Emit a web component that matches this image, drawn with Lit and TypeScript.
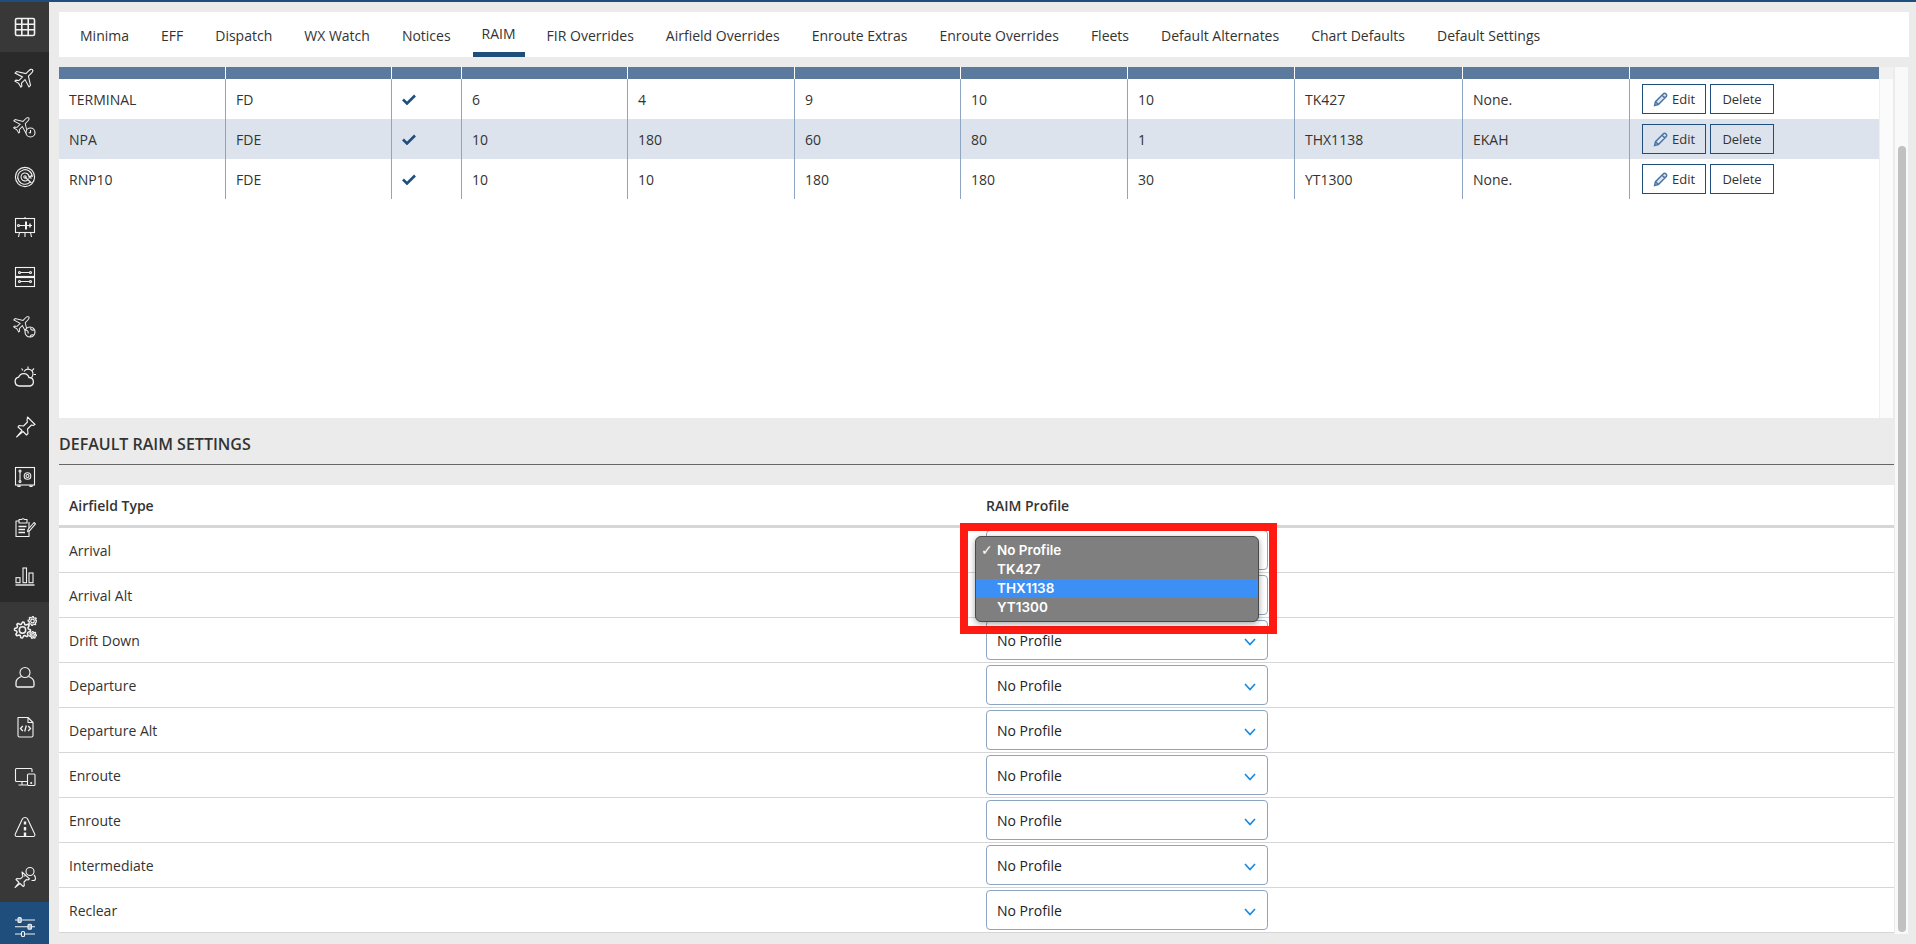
import { LitElement, css, html, svg } from 'lit'
import { customElement } from 'lit/decorators.js'

// plane pointing up, drawn around 12,12
const PLANE =
  'M12 1.5c1.1 0 1.8 1.6 1.8 3.2V9l8 5v2.2l-8-2.4v5l2.4 1.8V22L12 21l-4.2 1v-1.4l2.4-1.8v-5l-8 2.4V14l8-5V4.7c0-1.6.7-3.2 1.8-3.2z'

function gear(cx: number, cy: number, r: number, teeth: number) {
  const pts: string[] = []
  const step = (Math.PI * 2) / (teeth * 4)
  for (let i = 0; i < teeth * 4; i++) {
    const rad = i % 4 < 2 ? r : r * 0.74
    const a = i * step
    pts.push(`${(cx + Math.cos(a) * rad).toFixed(2)},${(cy + Math.sin(a) * rad).toFixed(2)}`)
  }
  return svg`<polygon points=${pts.join(' ')} stroke-linejoin="round"></polygon><circle cx=${cx} cy=${cy} r=${r * 0.4}></circle>`
}

const icons = [
  svg`<rect x="2.5" y="3.5" width="19" height="17" rx="1.5" stroke-width="1.6"></rect><path stroke-width="1.6" d="M2.5 9.2h19M2.5 14.8h19M8.8 3.5v17M15.2 3.5v17"></path>`,
  svg`<path transform="rotate(45 12 12)" d=${PLANE}></path>`,
  svg`<path transform="translate(-1 -1) scale(.86) rotate(45 12 12)" d=${PLANE}></path><circle class="solid-dark" cx="17.5" cy="17.5" r="4.5"></circle><path d="M17.5 15v2.7h-1.8"></path>`,
  svg`<circle cx="12" cy="12" r="9.6"></circle><path d="M19.3 12a7.3 7.3 0 1 0-2.2 5.2M16 12a4 4 0 1 0-1.2 2.8M12 12l6.5 6M15.5 10.5l3 3M18.5 10.5l-3 3"></path><circle cx="12" cy="12" r="1.2"></circle>`,
  svg`<rect x="2.5" y="3.500" width="19" height="14"></rect><path d="M12 2v1.500M6.500 17.500l-1 4.500M12 17.500V22M17.500 17.500l1 4.500M7 10.500h12"></path><circle cx="5.500" cy="10.500" r="1"></circle><path stroke-width="2" d="M13 6.500v8"></path><path stroke-width="1.500" d="M17 8.500v4"></path>`,
  svg`<rect x="2.5" y="2.5" width="19" height="19"></rect><path d="M2.5 12h19" stroke-width="2.2"></path><path d="M7 7.5h10M7 16.5h10"></path><circle cx="6.5" cy="7.5" r="1"></circle><circle cx="17.5" cy="7.5" r="1"></circle><circle cx="6.5" cy="16.5" r="1"></circle><circle cx="17.5" cy="16.5" r="1"></circle>`,
  svg`<path transform="translate(-1 -2) scale(.86) rotate(45 12 12)" d=${PLANE}></path><circle class="solid-dark" cx="17" cy="17" r="5"></circle><path d="M13 15c2 .5 2.5 2 2 3.500M18 12.500c-1 2 .5 3 3 2.500M17 22c.5-2 2-2.500 3.500-2"></path>`,
  svg`<path stroke-width="1.300" d="M6.500 21a4.500 4.500 0 0 1-.8-8.900A5.500 5.500 0 0 1 16 12.500a4.300 4.300 0 0 1 1 8.500z"></path><path d="M11 6.500a4.800 4.800 0 0 1 8.800 3.500 4.800 4.800 0 0 1-1.300 2.500M15 1.500v2.500M21 3.500l-1.700 1.800M23 9.500h-2.300M8.500 3.500l1.500 1.800"></path>`,
  svg`<path stroke-linejoin="round" d="M14.500 2l7.500 7.500-2 1-1.500-.5-4 4 .5 4.500-1.500 1.500-3.500-3.500-6.500 5.500 5.500-6.500-4-3.500L6 10.500l4.500.5 4-4-.5-1.500z"></path>`,
  svg`<rect x="2.500" y="2.500" width="19" height="17.500"></rect><path d="M5 20v1.500h2V20M17 20v1.500h2V20M7 6.500v9.500"></path><circle cx="7" cy="6" r="1"></circle><circle cx="7" cy="16.500" r="1"></circle><circle cx="14.500" cy="11" r="3.300"></circle><circle cx="14.500" cy="11" r="1.500"></circle>`,
  svg`<path stroke-linejoin="round" d="M16 7V21.500H3V6h3M6 6V4.500h2.500a2 2 0 0 1 3 0H14V8H6z"></path><path stroke-width="1.700" d="M5.500 11.500h8M5.500 14.500h6.500M5.500 17.500h6.500"></path><path stroke-linejoin="round" d="M15 14.500l6-7 1.500 1.300-6 7-2 .8z" class="solid-dark"></path>`,
  svg`<rect x="3" y="12.700" width="4" height="5"></rect><rect x="10" y="3" width="3.500" height="14.700"></rect><rect x="16" y="8" width="4" height="9.700"></rect><path d="M2.500 20h19" stroke-width="1.400"></path>`,
  svg`<g stroke-width="1.500">${gear(9.500, 15, 8, 8)}</g><g stroke-width="1.200">${gear(19.500, 6, 4.500, 8)}${gear(20, 20, 3.500, 7)}</g>`,
  svg`<circle cx="12" cy="7.500" r="5"></circle><path stroke-width="1.300" d="M8.500 11.500c-2.500 1-5.500 2.500-5.500 6v3a1.500 1.500 0 0 0 1.500 1.500h15a1.500 1.500 0 0 0 1.500-1.500v-3c0-3.500-3-5-5.500-6"></path>`,
  svg`<path stroke-linejoin="round" d="M5 2.500h10l5 5V20.500a1.500 1.500 0 0 1-1.500 1.500h-12A1.500 1.500 0 0 1 5 20.500zM15 2.500v5h5"></path><path stroke-width="1.300" d="M9.800 11l-2.300 2.500 2.300 2.500M15.200 11l2.300 2.500-2.300 2.500M13.300 10.500l-1.600 6"></path>`,
  svg`<path d="M14 16.500H3.500a1 1 0 0 1-1-1V4.500a1 1 0 0 1 1-1h14.500a1 1 0 0 1 1 1V7M9 16.500v3M5.500 20h8.500"></path><rect x="14.500" y="9" width="7.500" height="11.500" rx="1"></rect><circle cx="18.200" cy="18" r=".5"></circle>`,
  svg`<path stroke-linejoin="round" d="M9.500 3.800c1-1.800 4-1.800 5 0l7.200 15.200c.5 1.200-.2 2.500-1.500 2.500H3.800c-1.300 0-2-1.300-1.500-2.500z"></path><path stroke-width="2.400" d="M12 6.500v3M12 12v3.500M12 17.500v3.500"></path>`,
  svg`<path stroke-linejoin="round" d="M9 7l7.500 6.800-1.500 1.200-1.500-.5-2.500 2.500.3 3.500-1 1L7 18.500 2 22.500l4-5-3-3 1-1 3.500.3L10 11.300l-.5-1.500z"></path><circle cx="17" cy="6.500" r="4"></circle><path d="M13 10c-1 .5-1.500 1-1.500 1.500M21 10c1 1 1.500 2 1.500 3.500 0 1.500-1 2-2 2h-2"></path>`,
  svg`<path d="M2 5h3M8.500 5H22M2 11.700h13M18.500 11.700H22M2 19h6M12 19h10"></path><rect x="5" y="2.500" width="3.200" height="5" rx="1" class="solid-pale"></rect><rect x="15" y="9.200" width="3.500" height="5" rx="1" class="solid-pale"></rect><rect x="8.500" y="16.500" width="3" height="5" rx="1"></rect>`,
]

const tabs = [
  'Minima',
  'EFF',
  'Dispatch',
  'WX Watch',
  'Notices',
  'RAIM',
  'FIR Overrides',
  'Airfield Overrides',
  'Enroute Extras',
  'Enroute Overrides',
  'Fleets',
  'Default Alternates',
  'Chart Defaults',
  'Default Settings',
]

const profiles = [
  ['TERMINAL', 'FD', '6', '4', '9', '10', '10', 'TK427', 'None.'],
  ['NPA', 'FDE', '10', '180', '60', '80', '1', 'THX1138', 'EKAH'],
  ['RNP10', 'FDE', '10', '10', '180', '180', '30', 'YT1300', 'None.'],
]

const airfieldTypes = [
  'Arrival',
  'Arrival Alt',
  'Drift Down',
  'Departure',
  'Departure Alt',
  'Enroute',
  'Enroute',
  'Intermediate',
  'Reclear',
]

const menuItems = ['No Profile', 'TK427', 'THX1138', 'YT1300']

@customElement('app-root')
export class AppRoot extends LitElement {
  static styles = css`
    :host {
      display: block;
      height: 944px;
      overflow: hidden;
      border-top: 2px solid #1f4e7d;
      box-sizing: border-box;
      font-family: 'Open Sans', sans-serif;
      font-size: 14px;
      color: #333;
    }

    .shell {
      display: flex;
      height: 942px;
      background: #ebebeb;
    }

    .sidebar {
      width: 49px;
      flex: none;
      overflow: hidden;
      background: #2a2a2a;
    }

    .nav-item {
      height: 50px;
      display: flex;
      align-items: center;
      justify-content: center;
      --bg: #2a2a2a;
      background: var(--bg);
    }

    .nav-item.light {
      --bg: #383838;
    }

    .nav-item.active {
      --bg: #1f4e7d;
    }

    .nav-item svg {
      width: 24px;
      height: 24px;
      fill: none;
      stroke: #f2f2f2;
      stroke-width: 1.1;
    }

    .solid-dark {
      fill: var(--bg);
    }

    .solid-pale {
      fill: #a9bccf;
    }

    .main {
      flex: 1;
      min-width: 0;
      display: flex;
      flex-direction: column;
      padding: 10px 7px 10px 10px;
    }

    .tabs {
      height: 45px;
      flex: none;
      display: flex;
      padding-left: 5px;
      background: #fff;
    }

    .tab {
      margin: 0 7px;
      padding: 2px 9px 0;
      display: flex;
      align-items: center;
      white-space: nowrap;
    }

    .tab.active {
      margin: 0 6px;
      padding-top: 0;
      padding-bottom: 2px;
      box-shadow: inset 0 -5px 0 #1f4e7d;
    }

    .body {
      flex: 1;
      min-height: 0;
      margin-top: 10px;
      display: flex;
    }

    .content {
      width: 1835px;
      flex: none;
      display: flex;
      flex-direction: column;
    }

    .top-panel {
      height: 351px;
      flex: none;
      display: flex;
      margin-right: 1px;
    }

    .profiles {
      width: 1820px;
      flex: none;
      background: #fff;
    }

    .gutter {
      flex: 1;
      background: #fbfbfb;
      border-left: 1px solid #efefef;
    }

    .gutter-head {
      height: 12px;
      background: #f1f1f1;
    }

    .grid-row {
      display: grid;
      grid-template-columns: 167px 166px 70px 166px 167px 166px 167px 167px 168px 167px 249px;
    }

    .grid-row > div {
      box-sizing: border-box;
      border-right: 1px solid #8ea5c1;
      padding-left: 10px;
      display: flex;
      align-items: center;
    }

    .grid-row > div:last-child {
      border-right: none;
      padding-left: 12px;
      gap: 4px;
    }

    .grid-head {
      height: 12px;
      background: #5b7a9d;
    }

    .grid-head > div {
      border-right-color: #fff;
    }

    .grid-body {
      height: 40px;
    }

    .grid-body.alt {
      background: #dce3ec;
    }

    .check {
      width: 14px;
      height: 11px;
      fill: none;
      stroke: #1f4e7d;
      stroke-width: 2.6;
    }

    .btn {
      box-sizing: border-box;
      width: 64px;
      height: 30px;
      border: 1px solid #1f4e7d;
      display: flex;
      align-items: center;
      justify-content: center;
      gap: 4px;
      font-size: 13px;
    }

    .btn svg {
      width: 15px;
      height: 15px;
      fill: #dce6f1;
      stroke: #4a75a5;
      stroke-width: 1.4;
    }

    .settings {
      flex: 1;
      position: relative;
    }

    .settings h2 {
      margin: 0;
      height: 47px;
      box-sizing: border-box;
      padding-top: 12px;
      font-size: 16px;
      line-height: 28px;
      font-weight: 600;
      border-bottom: 1px solid #666;
    }

    .defaults {
      margin-top: 20px;
      background: #fff;
    }

    .defaults-row {
      display: grid;
      grid-template-columns: 927px 1fr;
      box-sizing: border-box;
      height: 45px;
      align-items: center;
      border-bottom: 1px solid #d6d6d6;
    }

    .defaults-row.head {
      height: 43px;
      border-bottom: 3px solid #d6d6d6;
      font-weight: 600;
    }

    .defaults-row > div:first-child {
      padding-left: 10px;
    }

    .select {
      box-sizing: border-box;
      width: 282px;
      height: 40px;
      border: 1px solid #8ea5c1;
      border-radius: 4px;
      padding: 0 11px 0 10px;
      display: flex;
      align-items: center;
      justify-content: space-between;
      color: #222;
    }

    .select svg {
      width: 12px;
      height: 8px;
      margin-top: 3px;
      fill: none;
      stroke: #1b8ae2;
      stroke-width: 1.7;
    }

    .callout {
      position: absolute;
      left: 901px;
      top: 105px;
      box-sizing: border-box;
      width: 317px;
      height: 111px;
      border: 8px solid #ff1a12;
    }

    .menu {
      box-sizing: border-box;
      margin: 5px 0 0 7px;
      width: 284px;
      height: 86px;
      padding: 4px 0;
      background: #7f7f7f;
      border: 1px solid #4a4a4a;
      border-radius: 6px;
      box-shadow: 0 2px 6px rgba(0, 0, 0, 0.35);
      font-family: Inter, sans-serif;
      font-size: 13.5px;
      font-weight: 600;
      color: #fff;
    }

    .menu-item {
      height: 19px;
      display: flex;
      align-items: center;
      line-height: 19px;
    }

    .menu-item.hover {
      background: #3b8ff5;
    }

    .tick {
      width: 21px;
      flex: none;
      box-sizing: border-box;
      padding-left: 5px;
      font-family: 'DejaVu Sans', sans-serif;
      font-size: 14px;
    }

    .scrollbar {
      width: 13px;
      margin-left: 1px;
      flex: none;
      display: flex;
      padding: 79px 2px 2px 3px;
      box-sizing: border-box;
      background: #f9f9f9;
    }

    .thumb {
      flex: 1;
      background: #c1c1c1;
      border-radius: 4px;
    }
  `

  render() {
    return html`
      <div class="shell">
        <nav class="sidebar">
          ${icons.map((icon, i) => {
            const tone = i === 18 ? 'active' : i === 0 || i >= 12 ? 'light' : ''
            return html`<div class="nav-item ${tone}"><svg viewBox="0 0 24 24">${icon}</svg></div>`
          })}
        </nav>
        <main class="main">
          <div class="tabs">
            ${tabs.map(t => html`<div class="tab ${t === 'RAIM' ? 'active' : ''}">${t}</div>`)}
          </div>
          <div class="body">
            <div class="content">
              <div class="top-panel">
                <div class="profiles">
                  <div class="grid-row grid-head">
                    ${Array.from({ length: 11 }, () => html`<div></div>`)}
                  </div>
                  ${profiles.map((p, i) => this.#profileRow(p, i))}
                </div>
                <div class="gutter"><div class="gutter-head"></div></div>
              </div>
              <section class="settings">
                <h2>DEFAULT RAIM SETTINGS</h2>
                <div class="defaults">
                  <div class="defaults-row head">
                    <div>Airfield Type</div>
                    <div>RAIM Profile</div>
                  </div>
                  ${airfieldTypes.map(
                    t => html`
                      <div class="defaults-row">
                        <div>${t}</div>
                        <div class="select">
                          <span>No Profile</span>
                          <svg viewBox="0 0 12 8"><path d="M1 1l5 5.500L11 1"></path></svg>
                        </div>
                      </div>
                    `
                  )}
                </div>
                <div class="callout">
                  <div class="menu">
                    ${menuItems.map(
                      (m, i) => html`
                        <div class="menu-item ${i === 2 ? 'hover' : ''}">
                          <span class="tick">${i === 0 ? '✓' : ''}</span>${m}
                        </div>
                      `
                    )}
                  </div>
                </div>
              </section>
            </div>
            <div class="scrollbar"><div class="thumb"></div></div>
          </div>
        </main>
      </div>
    `
  }

  #profileRow(p: string[], i: number) {
    return html`
      <div class="grid-row grid-body ${i === 1 ? 'alt' : ''}">
        <div>${p[0]}</div>
        <div>${p[1]}</div>
        <div><svg class="check" viewBox="0 0 14 11"><path d="M1 5.500l4 4L13 1.500"></path></svg></div>
        ${p.slice(2).map(v => html`<div>${v}</div>`)}
        <div>
          <div class="btn">
            <svg viewBox="0 0 14 14"><path d="M1.500 12.500l.8-3.500L9.500 1.800a1.500 1.500 0 0 1 2.700 2.700L5 11.700zM8.500 3l2.500 2.500M2.300 9l2.700 2.700"></path></svg>
            Edit
          </div>
          <div class="btn">Delete</div>
        </div>
      </div>
    `
  }
}
